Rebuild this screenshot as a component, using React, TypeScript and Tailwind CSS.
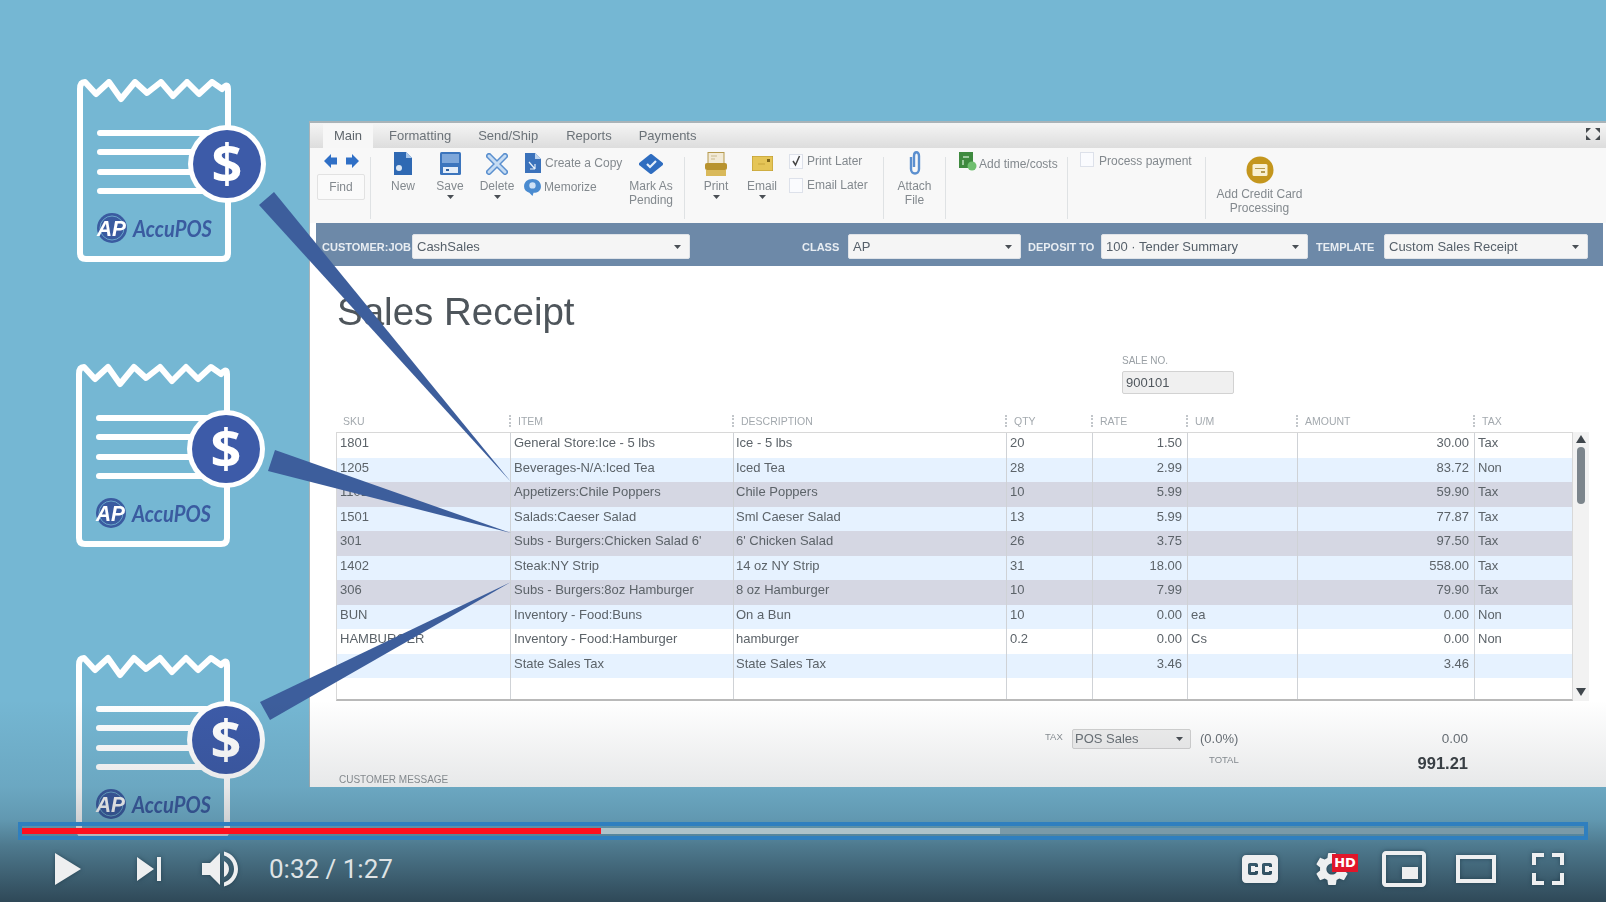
import React from "react";

type Row = {
  sku: string;
  item: string;
  desc: string;
  qty: string;
  rate: string;
  um: string;
  amount: string;
  tax: string;
  bg: string;
};

const rows: Row[] = [
  { sku: "1801", item: "General Store:Ice - 5 lbs", desc: "Ice - 5 lbs", qty: "20", rate: "1.50", um: "", amount: "30.00", tax: "Tax", bg: "bg-white" },
  { sku: "1205", item: "Beverages-N/A:Iced Tea", desc: "Iced Tea", qty: "28", rate: "2.99", um: "", amount: "83.72", tax: "Non", bg: "bg-[#e6f2ff]" },
  { sku: "1101", item: "Appetizers:Chile Poppers", desc: "Chile Poppers", qty: "10", rate: "5.99", um: "", amount: "59.90", tax: "Tax", bg: "bg-[#d5d7e3]" },
  { sku: "1501", item: "Salads:Caeser Salad", desc: "Sml Caeser Salad", qty: "13", rate: "5.99", um: "", amount: "77.87", tax: "Tax", bg: "bg-[#e6f2ff]" },
  { sku: "301", item: "Subs - Burgers:Chicken Salad 6'", desc: "6' Chicken Salad", qty: "26", rate: "3.75", um: "", amount: "97.50", tax: "Tax", bg: "bg-[#d5d7e3]" },
  { sku: "1402", item: "Steak:NY Strip", desc: "14 oz NY Strip", qty: "31", rate: "18.00", um: "", amount: "558.00", tax: "Tax", bg: "bg-[#e6f2ff]" },
  { sku: "306", item: "Subs - Burgers:8oz Hamburger", desc: "8 oz Hamburger", qty: "10", rate: "7.99", um: "", amount: "79.90", tax: "Tax", bg: "bg-[#d5d7e3]" },
  { sku: "BUN", item: "Inventory - Food:Buns", desc: "On a Bun", qty: "10", rate: "0.00", um: "ea", amount: "0.00", tax: "Non", bg: "bg-[#e6f2ff]" },
  { sku: "HAMBURGER", item: "Inventory - Food:Hamburger", desc: "hamburger", qty: "0.2", rate: "0.00", um: "Cs", amount: "0.00", tax: "Non", bg: "bg-white" },
  { sku: "", item: "State Sales Tax", desc: "State Sales Tax", qty: "", rate: "3.46", um: "", amount: "3.46", tax: "", bg: "bg-[#e6f2ff]" },
  { sku: "", item: "", desc: "", qty: "", rate: "", um: "", amount: "", tax: "", bg: "bg-white" },
];

const gridCols = "grid grid-cols-[175px_223px_273px_86px_95px_110px_177px_98px]";

function Receipt({ className }: { className: string }) {
  return (
    <svg width="200" height="183" viewBox="0 0 200 183" className={"block overflow-visible " + className}>
      <path
        d="M3 10 Q3 3 8 3 L19 15 L32 3 L44 20 L58 3 L70 14 L84 3 L96 17 L110 3 L122 15 L135 3 L145 10 Q151 3 151 10 V174 Q151 180 145 180 H9 Q3 180 3 174 Z"
        fill="none"
        stroke="#fff"
        strokeWidth="6"
        strokeLinejoin="round"
      />
      <path d="M23 54H130M23 73H120M23 93H120M23 112H130" stroke="#fff" strokeWidth="6" strokeLinecap="round" />
      <circle cx="150" cy="85" r="39" fill="#fff" />
      <circle cx="150" cy="85" r="34" fill="#3d5ba8" />
      <text x="150" y="104" textAnchor="middle" fontSize="54" fontWeight="700" fill="#fff" fontFamily="'Open Sans', sans-serif">
        $
      </text>
      <circle cx="35" cy="149" r="15" fill="#3a5ba0" />
      <circle cx="35" cy="149" r="12" fill="none" stroke="#75b7d3" strokeWidth="0.8" />
      <text x="20" y="157" fontSize="22" fontWeight="700" fontStyle="italic" fill="#fff" fontFamily="'Liberation Sans', sans-serif" textLength="29" lengthAdjust="spacingAndGlyphs">
        AP
      </text>
      <text x="56" y="158" fontSize="23" fontWeight="700" fontStyle="italic" fill="#3a5ba0" fontFamily="Lato, sans-serif" textLength="79" lengthAdjust="spacingAndGlyphs">
        AccuPOS
      </text>
    </svg>
  );
}

function Caret({ className = "" }: { className?: string }) {
  return (
    <svg width="7" height="4" viewBox="0 0 7 4" className={className}>
      <path d="M0 0H7L3.5 4Z" fill="#4a4f55" />
    </svg>
  );
}

function Divider() {
  return <div className="w-px h-[62px] mt-[6px] bg-[#dfe2e4] shrink-0" />;
}

function RibbonBtn({
  width,
  lines,
  caret,
  icon,
}: {
  width: string;
  lines: string[];
  caret?: boolean;
  icon: React.ReactNode;
}) {
  return (
    <div className={width + " shrink-0 flex flex-col items-center"}>
      <div className="h-[25px] flex items-center justify-center">{icon}</div>
      <div className="mt-[3px] text-center leading-[14px]">
        {lines.map((l) => (
          <div key={l}>{l}</div>
        ))}
      </div>
      {caret && <Caret className="mt-[2px]" />}
    </div>
  );
}

function Check({ on }: { on?: boolean }) {
  return (
    <div className="w-[14px] h-[15px] border border-[#dde1ea] bg-[#fafbfe] flex items-center justify-center shrink-0">
      {on && (
        <svg width="10" height="12" viewBox="0 0 10 12">
          <path d="M2 6L4.5 10L8.5 1" fill="none" stroke="#444" strokeWidth="1.5" />
        </svg>
      )}
    </div>
  );
}

function Dropdown({ text, width }: { text: string; width: string }) {
  return (
    <div className={width + " h-[25px] bg-[#f5f5f5] rounded-[2px] border border-[#dfe3e8] flex items-center justify-between pl-[4px] pr-[8px] text-[13px] text-[#56606a] shrink-0"}>
      <span>{text}</span>
      <Caret />
    </div>
  );
}

function BarLabel({ text, className }: { text: string; className: string }) {
  return <span className={"text-[11px] mt-[2px] font-bold text-[#e8edf2] whitespace-nowrap " + className}>{text}</span>;
}

function HeaderCell({ text, dotted }: { text: string; dotted?: boolean }) {
  return (
    <div className="relative pl-[7px] text-[10.5px] leading-[13px] text-[#a3a9ae]">
      {dotted && <span className="absolute left-[-2px] top-0 h-[12px] border-l-2 border-dotted border-[#c2c6ca]" />}
      {text}
    </div>
  );
}

function YtIcon({ children }: { children: React.ReactNode }) {
  return (
    <svg width="72" height="72" viewBox="0 0 36 36" fill="#eeeff0" className="shrink-0 drop-shadow-[0_0_2px_rgba(20,45,60,0.6)]">
      {children}
    </svg>
  );
}

export default function App() {
  return (
    <div className="relative w-[1606px] h-[902px] overflow-hidden bg-[#75b7d3] font-['Liberation_Sans',Arial,sans-serif]">
      <div className="flex h-full">
        {/* receipts */}
        <div className="w-[309px] shrink-0 pl-[76px] pt-[79px] blur-[0.4px]">
          <Receipt className="ml-px" />
          <Receipt className="mt-[102px]" />
          <Receipt className="mt-[108px]" />
        </div>

        {/* quickbooks window */}
        <div className="mt-[121px] w-[1297px] h-[666px] bg-white border-t-2 border-l border-[#a9b3b8] flex flex-col blur-[0.45px] text-[#6b7278]">
          {/* tabs */}
          <div className="h-[25px] shrink-0 bg-gradient-to-b from-[#f5f5f5] to-[#dddddd] flex items-end text-[13px] relative">
            <div className="ml-[13px] w-[50px] h-[24px] bg-[#f7f7f7] text-center leading-[24px] text-[#5f666c]">Main</div>
            <div className="ml-[16px] leading-[24px]">Formatting</div>
            <div className="ml-[27px] leading-[24px]">Send/Ship</div>
            <div className="ml-[28px] leading-[24px]">Reports</div>
            <div className="ml-[27px] leading-[24px]">Payments</div>
            <svg width="14" height="12" viewBox="0 0 14 12" className="absolute right-[6px] top-[5px]">
              <path d="M0 0H5L0 5ZM14 0H9L14 5ZM0 12H5L0 7ZM14 12H9L14 7Z" fill="#454a4e" />
            </svg>
          </div>

          {/* ribbon */}
          <div className="h-[75px] shrink-0 bg-[#f8f8f8] flex text-[12px] text-[#83898e] pt-[3px]">
            <div className="w-[60px] shrink-0 flex flex-col items-center pl-[2px]">
              <div className="flex gap-[9px] h-[20px] items-center">
                <svg width="13" height="14" viewBox="0 0 13 14"><path d="M0 7L7 0V3.5H13V10.5H7V14Z" fill="#2f6fc6" strokeLinejoin="round" /></svg>
                <svg width="13" height="14" viewBox="0 0 13 14"><path d="M13 7L6 0V3.5H0V10.5H6V14Z" fill="#2f6fc6" strokeLinejoin="round" /></svg>
              </div>
              <div className="mt-[3px] w-[48px] h-[26px] bg-[#fafafa] border border-[#e2e2e2] rounded-[2px] text-center leading-[24px]">Find</div>
            </div>
            <Divider />
            <div className="w-[8px] shrink-0" />
            <RibbonBtn
              width="w-[48px]"
              lines={["New"]}
              icon={
                <svg width="20" height="23" viewBox="0 0 20 23">
                  <path d="M1 0H13L19 6V23H1Z" fill="#2f69b3" />
                  <path d="M13 0L19 6H13Z" fill="#a8c6ea" />
                  <circle cx="6" cy="16" r="3" fill="#dbe7f5" />
                </svg>
              }
            />
            <RibbonBtn
              width="w-[46px]"
              lines={["Save"]}
              caret
              icon={
                <svg width="21" height="23" viewBox="0 0 21 23">
                  <rect width="21" height="23" rx="1.5" fill="#3c75bd" />
                  <rect x="2" y="2" width="17" height="9" fill="#7ea7da" />
                  <rect x="3" y="15" width="15" height="6" fill="#e4edf8" />
                  <rect x="6" y="17" width="3" height="2" fill="#2f5e9c" />
                </svg>
              }
            />
            <RibbonBtn
              width="w-[48px]"
              lines={["Delete"]}
              caret
              icon={
                <svg width="22" height="22" viewBox="0 0 22 22">
                  <path d="M3 3L19 19M19 3L3 19" stroke="#5b90cf" strokeWidth="6" strokeLinecap="round" />
                  <path d="M3 3L19 19M19 3L3 19" stroke="#c6dcf3" strokeWidth="3" strokeLinecap="round" />
                </svg>
              }
            />
            <div className="w-[100px] shrink-0 flex flex-col gap-[6px] pl-[3px] pt-[3px]">
              <div className="flex items-center gap-[4px] h-[18px] whitespace-nowrap">
                <svg width="17" height="20" viewBox="0 0 17 20" className="shrink-0">
                  <path d="M1 0H11L17 6V20H1Z" fill="#3b72bb" />
                  <path d="M11 0L17 6H11Z" fill="#bcd3ee" />
                  <path d="M5 9L11 16M11 16V11M11 16H6" stroke="#e6effa" strokeWidth="1.2" fill="none" />
                </svg>
                Create a Copy
              </div>
              <div className="flex items-center gap-[2px] h-[18px] whitespace-nowrap -ml-[1px]">
                <svg width="19" height="19" viewBox="0 0 18 18" className="shrink-0">
                  <path d="M9 1C14 1 17 4 17 8C17 12 14 14 10 14L9 17L6 14C3 13 1 11 1 8C1 4 4 1 9 1Z" fill="#4a8bd0" />
                  <circle cx="9" cy="7" r="3" fill="#cfe2f6" />
                </svg>
                Memorize
              </div>
            </div>
            <RibbonBtn
              width="w-[60px]"
              lines={["Mark As", "Pending"]}
              icon={
                <svg width="24" height="20" viewBox="0 0 24 20">
                  <path d="M12 2L22 10L12 18L2 10Z" fill="#2f6dc0" stroke="#2f6dc0" strokeWidth="4" strokeLinejoin="round" />
                  <path d="M8 10L11 13L17 7" stroke="#e4effa" strokeWidth="2.2" fill="none" />
                </svg>
              }
            />
            <div className="w-[3px] shrink-0" />
            <Divider />
            <div className="w-[8px] shrink-0" />
            <RibbonBtn
              width="w-[46px]"
              lines={["Print"]}
              caret
              icon={
                <svg width="22" height="24" viewBox="0 0 22 24">
                  <rect x="3" y="0.5" width="16" height="12" fill="#f2ead6" stroke="#b59a4e" />
                  <path d="M6 4H12M6 7H10" stroke="#c9b98c" />
                  <rect x="0" y="11" width="22" height="7" rx="2" fill="#b8932f" />
                  <rect x="1" y="18" width="20" height="6" fill="#d9b95a" />
                </svg>
              }
            />
            <RibbonBtn
              width="w-[46px]"
              lines={["Email"]}
              caret
              icon={
                <svg width="21" height="15" viewBox="0 0 21 15">
                  <rect width="21" height="15" fill="#e5c557" stroke="#b8962f" />
                  <rect x="15" y="3" width="3" height="3" fill="#7d6418" />
                  <path d="M6 8H13" stroke="#c7a53d" />
                </svg>
              }
            />
            <div className="w-[98px] shrink-0 flex flex-col gap-[8px] pl-[4px] pt-[2px]">
              <div className="flex items-center gap-[4px] h-[16px] whitespace-nowrap"><Check on /> Print Later</div>
              <div className="flex items-center gap-[4px] h-[16px] whitespace-nowrap"><Check /> Email Later</div>
            </div>
            <Divider />
            <RibbonBtn
              width="w-[61px]"
              lines={["Attach", "File"]}
              icon={
                <svg width="14" height="25" viewBox="0 0 14 25">
                  <path d="M3 6V18C3 24 11 24 11 18V5C11 0 6 0 6 5V16" fill="none" stroke="#5b8fcf" strokeWidth="2.4" />
                </svg>
              }
            />
            <Divider />
            <div className="w-[121px] shrink-0 flex items-start gap-[2px] pl-[13px] pt-[4px] whitespace-nowrap">
              <svg width="18" height="19" viewBox="0 0 18 19" className="shrink-0 -mt-[3px]">
                <rect width="14" height="16" fill="#3f8a3f" />
                <path d="M4 5H10M4 8V13" stroke="#bfe0bf" strokeWidth="1.5" />
                <circle cx="13" cy="14" r="4.5" fill="#6fbf6f" />
              </svg>
              Add time/costs
            </div>
            <Divider />
            <div className="w-[137px] shrink-0 flex items-start gap-[5px] pl-[12px] whitespace-nowrap pt-[1px]">
              <Check /> Process payment
            </div>
            <Divider />
            <div className="w-[107px] shrink-0 flex flex-col items-center">
              <svg width="28" height="28" viewBox="0 0 28 28" className="mt-[5px]">
                <circle cx="14" cy="14" r="13.5" fill="#c4961d" />
                <rect x="6.5" y="8" width="15" height="12" rx="1.5" fill="#f8f0d2" />
                <rect x="9" y="12" width="10" height="1" fill="#b59a4e" />
                <rect x="15" y="15" width="4" height="2" fill="#b59a4e" />
              </svg>
              <div className="mt-[3px] text-center leading-[14px] whitespace-nowrap">
                <div>Add Credit Card</div>
                <div>Processing</div>
              </div>
            </div>
          </div>

          {/* customer bar */}
          <div className="ml-[6px] w-[1287px] h-[43px] shrink-0 bg-[#6d89a8] flex items-center pl-[6px] pt-[4px]">
            <BarLabel text="CUSTOMER:JOB" className="w-[90px]" />
            <Dropdown text="CashSales" width="w-[278px]" />
            <BarLabel text="CLASS" className="ml-[112px] w-[46px]" />
            <Dropdown text="AP" width="w-[173px]" />
            <BarLabel text="DEPOSIT TO" className="ml-[7px] w-[73px]" />
            <Dropdown text="100 · Tender Summary" width="w-[207px]" />
            <BarLabel text="TEMPLATE" className="ml-[8px] w-[68px]" />
            <Dropdown text="Custom Sales Receipt" width="w-[204px]" />
          </div>

          <h1 className="mt-[23px] ml-[27px] h-[46px] text-[38.5px] leading-[46px] font-normal text-[#4e555b] shrink-0">Sales Receipt</h1>

          <div className="mt-[20px] ml-[812px] h-[12px] text-[10px] leading-[12px] text-[#9aa0a5] shrink-0">SALE NO.</div>
          <div className="mt-[4px] ml-[812px] w-[112px] h-[23px] bg-[#f0f0f0] border border-[#d2d2d2] rounded-[2px] pl-[3px] text-[13px] leading-[21px] text-[#50575d] shrink-0">900101</div>

          {/* table header */}
          <div className={"mt-[21px] ml-[26px] h-[17px] shrink-0 " + gridCols}>
            <HeaderCell text="SKU" />
            <HeaderCell text="ITEM" dotted />
            <HeaderCell text="DESCRIPTION" dotted />
            <HeaderCell text="QTY" dotted />
            <HeaderCell text="RATE" dotted />
            <HeaderCell text="U/M" dotted />
            <HeaderCell text="AMOUNT" dotted />
            <HeaderCell text="TAX" dotted />
          </div>

          {/* table */}
          <div className="ml-[26px] flex h-[269px] shrink-0">
            <div className="w-[1237px] h-full border border-[#d8d8d8] border-b-2 border-b-[#b9b9b9] overflow-hidden">
              {rows.map((r, i) => (
                <div key={i} className={gridCols + " h-[24.5px] text-[13px] leading-[20px] text-[#5c6369] -ml-px " + r.bg}>
                  <div className="border-r border-[#cfd2d6] pl-[4px]">{r.sku}</div>
                  <div className="border-r border-[#cfd2d6] pl-[3px] whitespace-nowrap">{r.item}</div>
                  <div className="border-r border-[#cfd2d6] pl-[2px]">{r.desc}</div>
                  <div className="border-r border-[#cfd2d6] pl-[3px]">{r.qty}</div>
                  <div className="border-r border-[#cfd2d6] pr-[5px] text-right">{r.rate}</div>
                  <div className="border-r border-[#cfd2d6] pl-[3px]">{r.um}</div>
                  <div className="border-r border-[#cfd2d6] pr-[5px] text-right">{r.amount}</div>
                  <div className="pl-[3px]">{r.tax}</div>
                </div>
              ))}
            </div>
            {/* scrollbar */}
            <div className="w-[16px] h-full bg-[#f2f2f2] flex flex-col items-center pt-[3px]">
              <svg width="10" height="8" viewBox="0 0 10 8"><path d="M5 0L10 8H0Z" fill="#3f464c" /></svg>
              <div className="mt-[4px] w-[8px] h-[57px] rounded-[4px] bg-[#7c858c]" />
              <svg width="10" height="8" viewBox="0 0 10 8" className="mt-auto mb-[5px]"><path d="M5 8L10 0H0Z" fill="#3f464c" /></svg>
            </div>
          </div>

          {/* totals */}
          <div className="mt-[28px] w-[1158px] h-[20px] pl-[735px] flex items-center shrink-0 text-[#6a7177]">
            <span className="w-[27px] text-[9.5px] -mt-[3px] text-[#8b9196]">TAX</span>
            <div className="w-[119px] h-[20px] bg-[#f0f0f0] border border-[#d2d2d2] rounded-[2px] flex items-center justify-between pl-[2px] pr-[7px] text-[13px]">
              <span>POS Sales</span>
              <Caret />
            </div>
            <span className="ml-[9px] text-[13px]">(0.0%)</span>
            <span className="ml-auto text-[13.5px]">0.00</span>
          </div>
          <div className="w-[1158px] h-[25px] pl-[899px] flex items-center justify-between shrink-0">
            <span className="text-[9.5px] text-[#8b9196] -mt-[2px]">TOTAL</span>
            <span className="text-[16.5px] font-bold text-[#3c4247] mt-[3px]">991.21</span>
          </div>
          <div className="ml-[29px] h-[12px] text-[10px] leading-[12px] text-[#8f9498] shrink-0">CUSTOMER MESSAGE</div>
        </div>
      </div>

      {/* beams from the receipts to the rows */}
      <svg width="1606" height="902" viewBox="0 0 1606 902" className="absolute inset-0 blur-[0.4px]">
        <polygon points="259,205 274,192 511,482" fill="#3d5e9c" />
        <polygon points="275,450 268,471 511,533" fill="#3d5e9c" />
        <polygon points="260,702 270,720 511,582" fill="#3d5e9c" />
      </svg>

      {/* player chrome */}
      <div className="absolute left-0 right-0 bottom-0 h-[202px] pt-[122px] bg-[linear-gradient(to_bottom,rgba(20,30,40,0)_0%,rgba(20,30,40,0.1)_43%,rgba(20,30,40,0.2)_59%,rgba(20,30,40,0.4)_72%,rgba(20,30,40,0.72)_100%)]">
        <div className="ml-[18px] w-[1570px] h-[18px] border-4 border-[#2f7fbf] py-[2px]">
          <div className="flex h-[6px]">
            <div className="w-[579px] bg-[#ff0f1f]" />
            <div className="w-[399px] bg-[#adc2c9]" />
            <div className="flex-1 bg-[#7a9aa8]" />
          </div>
        </div>

        <div className="h-[58px] flex items-center pl-[31px] pr-[22px]">
          <YtIcon><path d="M12 26L18.5 22V14L12 10ZM18.5 22L25 18L18.5 14Z" /></YtIcon>
          <div className="ml-[10px] flex">
            <YtIcon><path d="M12 24L20.5 18L12 12ZM22 12V24H24V12Z" /></YtIcon>
          </div>
          <div className="ml-px flex">
            <YtIcon>
              <path d="M8,21 L12,21 L17,26 L17,10 L12,15 L8,15 L8,21 Z M19,14 L19,22 C20.48,21.32 21.5,19.77 21.5,18 C21.5,16.26 20.48,14.74 19,14 ZM19,11.29 C21.89,12.15 24,14.83 24,18 C24,21.17 21.89,23.85 19,24.71 L19,26.77 C23.01,25.86 26,22.28 26,18 C26,13.72 23.01,10.14 19,9.23 L19,11.29 Z" />
            </YtIcon>
          </div>
          <span className="ml-[11px] text-[26px] text-[#dfe3e5] whitespace-nowrap font-['Roboto',sans-serif]">0:32 / 1:27</span>

          <div className="ml-auto flex">
            <YtIcon>
              <path d="M11,11 C9.89,11 9,11.9 9,13 L9,23 C9,24.1 9.89,25 11,25 L25,25 C26.1,25 27,24.1 27,23 L27,13 C27,11.9 26.1,11 25,11 L11,11 Z M17,17 L15.5,17 L15.5,16.5 L13.5,16.5 L13.5,19.5 L15.5,19.5 L15.5,19 L17,19 L17,20 C17,20.55 16.55,21 16,21 L13,21 C12.45,21 12,20.55 12,20 L12,16 C12,15.45 12.45,15 13,15 L16,15 C16.55,15 17,15.45 17,16 L17,17 Z M24,17 L22.5,17 L22.5,16.5 L20.5,16.5 L20.5,19.5 L22.5,19.5 L22.5,19 L24,19 L24,20 C24,20.55 23.55,21 23,21 L20,21 C19.45,21 19,20.55 19,20 L19,16 C19,15.45 19.45,15 20,15 L23,15 C23.55,15 24,15.45 24,16 L24,17 Z" />
            </YtIcon>
            <div className="relative">
              <YtIcon>
                <path d="m 23.94,18.78 c .03,-0.25 .05,-0.51 .05,-0.78 0,-0.27 -0.02,-0.52 -0.05,-0.78 l 1.68,-1.32 c .15,-0.12 .19,-0.33 .09,-0.51 l -1.6,-2.76 c -0.09,-0.17 -0.31,-0.24 -0.48,-0.17 l -1.99,.8 c -0.41,-0.32 -0.86,-0.58 -1.35,-0.78 l -0.30,-2.12 c -0.02,-0.19 -0.19,-0.33 -0.39,-0.33 l -3.2,0 c -0.2,0 -0.36,.14 -0.39,.33 l -0.30,2.12 c -0.48,.2 -0.93,.47 -1.35,.78 l -1.99,-0.8 c -0.18,-0.07 -0.39,0 -0.48,.17 l -1.6,2.76 c -0.10,.17 -0.05,.39 .09,.51 l 1.68,1.32 c -0.03,.25 -0.05,.52 -0.05,.78 0,.26 .02,.52 .05,.78 l -1.68,1.32 c -0.15,.12 -0.19,.33 -0.09,.51 l 1.6,2.76 c .09,.17 .31,.24 .48,.17 l 1.99,-0.8 c .41,.32 .86,.58 1.35,.78 l .30,2.12 c .02,.19 .19,.33 .39,.33 l 3.2,0 c .2,0 .36,-0.14 .39,-0.33 l .30,-2.12 c .48,-0.2 .93,-0.47 1.35,-0.78 l 1.99,.8 c .18,.07 .39,0 .48,-0.17 l 1.6,-2.76 c .09,-0.17 .05,-0.39 -0.09,-0.51 l -1.68,-1.32 0,0 z m -5.94,2.01 c -1.54,0 -2.8,-1.25 -2.8,-2.8 0,-1.54 1.25,-2.8 2.8,-2.8 1.54,0 2.8,1.25 2.8,2.8 0,1.54 -1.25,2.8 -2.8,2.8 l 0,0 z" />
              </YtIcon>
              <span className="absolute left-[36px] top-[21px] w-[26px] h-[18px] bg-[#e1162a] text-white text-[13px] leading-[18px] font-bold text-center font-['DejaVu_Sans',sans-serif]">HD</span>
            </div>
            <YtIcon>
              <path d="M25,17 L17,17 L17,23 L25,23 L25,17 L25,17 Z M29,25 L29,10.98 C29,9.88 28.1,9 27,9 L9,9 C7.9,9 7,9.88 7,10.98 L7,25 C7,26.1 7.9,27 9,27 L27,27 C28.1,27 29,26.1 29,25 L29,25 Z M27,25.02 L9,25.02 L9,10.97 L27,10.97 L27,25.02 L27,25.02 Z" />
            </YtIcon>
            <YtIcon>
              <path fillRule="evenodd" d="m 28,11 0,14 -20,0 0,-14 z m -18,2 16,0 0,10 -16,0 0,-10 z" />
            </YtIcon>
            <YtIcon>
              <path d="m 10,16 2,0 0,-4 4,0 0,-2 L 10,10 l 0,6 0,0 z" />
              <path d="m 20,10 0,2 4,0 0,4 2,0 L 26,10 l -6,0 0,0 z" />
              <path d="m 24,24 -4,0 0,2 L 26,26 l 0,-6 -2,0 0,4 0,0 z" />
              <path d="M 12,20 10,20 10,26 l 6,0 0,-2 -4,0 0,-4 0,0 z" />
            </YtIcon>
          </div>
        </div>
      </div>
    </div>
  );
}
